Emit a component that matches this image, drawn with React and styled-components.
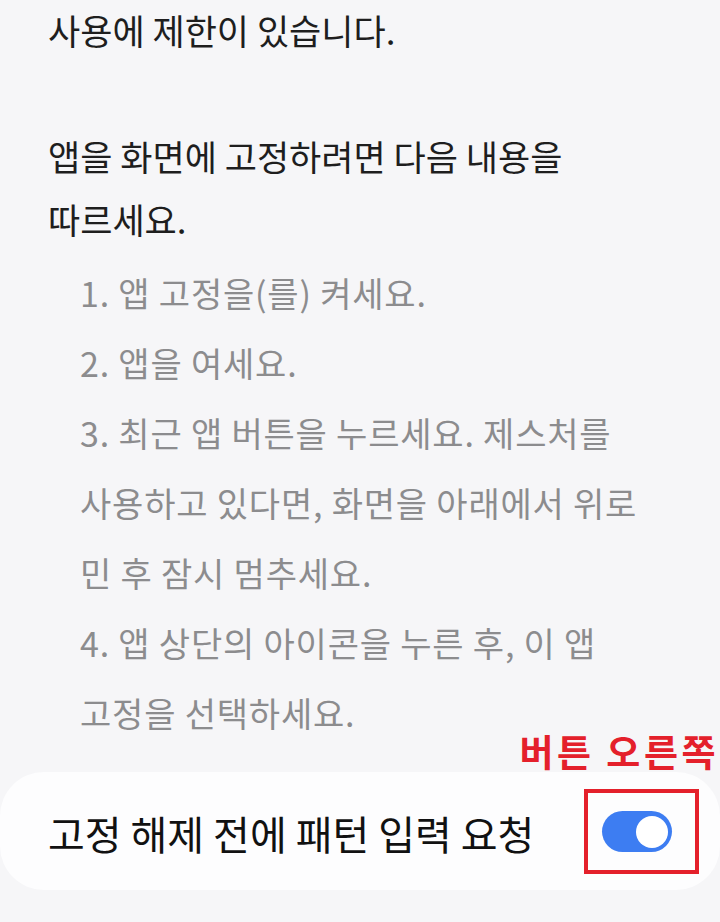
import React from "react";
import styled, { createGlobalStyle } from "styled-components";

const GlobalStyle = createGlobalStyle`
  html, body {
    margin: 0;
    padding: 0;
    background: #f6f6f8;
  }
  body {
    font-family: "Noto Sans CJK KR", "Noto Sans", sans-serif;
  }
`;

const Page = styled.div`
  width: 720px;
  height: 922px;
  overflow: hidden;
  background: #f6f6f8;
  display: flex;
  flex-direction: column;
`;

const Body = styled.div`
  margin-top: -2px;
  padding-left: 48px;
`;

const Paragraph = styled.p`
  margin: 0;
  font-size: 35px;
  line-height: 63px;
  color: #1e1e1e;
`;

const Steps = styled.ol`
  list-style: none;
  margin: 8px 0 0;
  padding: 0 0 0 32px;
`;

const Step = styled.li`
  font-size: 34px;
  line-height: 70px;
  color: #8c8c8e;
  letter-spacing: 0.8px;
`;

const Card = styled.div`
  position: relative;
  margin-top: 24px;
  height: 118px;
  background: #fdfdfe;
  border-radius: 44px;
  display: flex;
  align-items: center;
  justify-content: space-between;
  padding: 0 21px 0 48px;
`;

const Label = styled.span`
  font-size: 40px;
  color: #111;
  margin-top: 4px;
`;

const Highlight = styled.div`
  position: relative;
  width: 93px;
  height: 77px;
  margin-top: 1px;
  padding-left: 14px;
  border: 4px solid #e4202b;
  display: flex;
  align-items: center;
`;

const Note = styled.span`
  position: absolute;
  right: -24px;
  bottom: calc(100% + 22px);
  white-space: nowrap;
  font-size: 37px;
  line-height: 40px;
  font-weight: 700;
  color: #e4202b;
  letter-spacing: 3.5px;
`;

const Toggle = styled.div`
  width: 70px;
  height: 41px;
  border-radius: 21px;
  background: ${(p) => (p.$on ? "#3d7df2" : "#c4c4c6")};
  display: flex;
  align-items: center;
  justify-content: ${(p) => (p.$on ? "flex-end" : "flex-start")};
  padding: 0 4px;
  box-sizing: border-box;
`;

const Knob = styled.div`
  width: 32px;
  height: 32px;
  border-radius: 50%;
  background: #fff;
`;

const steps = [
  ["1. 앱 고정을(를) 켜세요."],
  ["2. 앱을 여세요."],
  [
    "3. 최근 앱 버튼을 누르세요. 제스처를",
    "사용하고 있다면, 화면을 아래에서 위로",
    "민 후 잠시 멈추세요.",
  ],
  ["4. 앱 상단의 아이콘을 누른 후, 이 앱", "고정을 선택하세요."],
];

export default function App() {
  return (
    <Page>
      <GlobalStyle />
      <Body>
        <Paragraph>사용에 제한이 있습니다.</Paragraph>
        <Paragraph>&nbsp;</Paragraph>
        <Paragraph>
          앱을 화면에 고정하려면 다음 내용을
          <br />
          따르세요.
        </Paragraph>
        <Steps>
          {steps.map((lines, i) => (
            <Step key={i}>
              {lines.map((l, j) => (
                <React.Fragment key={j}>
                  {j > 0 && <br />}
                  {l}
                </React.Fragment>
              ))}
            </Step>
          ))}
        </Steps>
      </Body>
      <Card>
        <Label>고정 해제 전에 패턴 입력 요청</Label>
        <Highlight>
          <Note>버튼 오른쪽</Note>
          <Toggle $on>
            <Knob />
          </Toggle>
        </Highlight>
      </Card>
    </Page>
  );
}
